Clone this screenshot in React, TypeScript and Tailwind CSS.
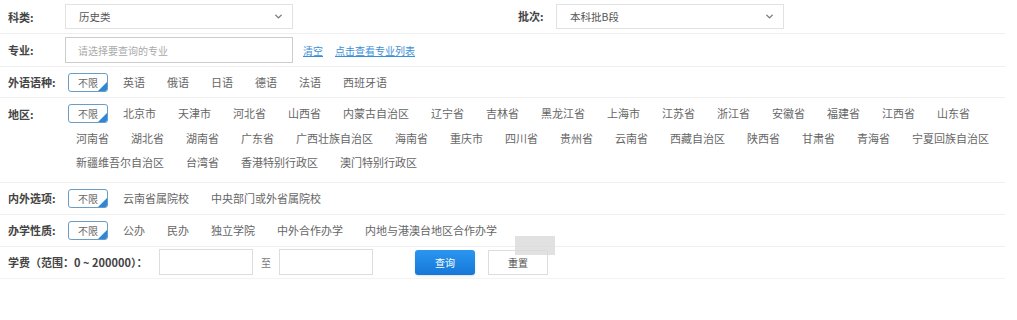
import { ChevronDown } from "lucide-react";

const font = "font-['Noto_Sans_CJK_SC','Noto_Sans',sans-serif]";

const langs = ["英语", "俄语", "日语", "德语", "法语", "西班牙语"];
const regions = [
	"北京市", "天津市", "河北省", "山西省", "内蒙古自治区", "辽宁省", "吉林省", "黑龙江省", "上海市", "江苏省", "浙江省", "安徽省", "福建省", "江西省", "山东省",
	"河南省", "湖北省", "湖南省", "广东省", "广西壮族自治区", "海南省", "重庆市", "四川省", "贵州省", "云南省", "西藏自治区", "陕西省", "甘肃省", "青海省", "宁夏回族自治区",
	"新疆维吾尔自治区", "台湾省", "香港特别行政区", "澳门特别行政区",
];
const inOut = ["云南省属院校", "中央部门或外省属院校"];
const schoolTypes = ["公办", "民办", "独立学院", "中外合作办学", "内地与港澳台地区合作办学"];

const Label = ({ children, className = "" }: { children: React.ReactNode; className?: string }) => (
	<div className={`w-[57px] shrink-0 text-[11px] font-bold text-[#444] ${className}`}>{children}</div>
);

const AnyTag = () => (
	<div className="relative ml-[3px] mr-[4px] flex h-[19px] w-[40px] items-center justify-center overflow-hidden rounded-[3px] border border-[#6a9cc4] bg-white text-[10px] text-[#666]">
		不限
		<span className="absolute bottom-0 right-0 h-0 w-0 border-b-[9px] border-l-[9px] border-b-[#2f86d6] border-l-transparent" />
	</div>
);

const Options = ({ items }: { items: string[] }) => (
	<div className="flex flex-1 flex-wrap items-center">
		<AnyTag />
		{items.map((item) => (
			<span key={item} className="px-[11px] text-[11px] leading-[24.5px] text-[#666]">
				{item}
			</span>
		))}
	</div>
);

const Select = ({ value }: { value: string }) => (
	<div className="flex h-[25px] w-[228px] items-center justify-between border border-[#e2e2e2] bg-white pl-[13px] pr-2 text-[10.5px] text-[#555]">
		<span>{value}</span>
		<ChevronDown size={11} strokeWidth={3} className="text-[#777]" />
	</div>
);

export default function App() {
	return (
		<div className={`relative h-[320px] w-[1017px] bg-white ${font}`}>
			<div className="w-[1005px]">
				<div className="flex h-[34px] items-center border-b border-[#eee] pl-2">
					<Label className="mt-[1px]">科类:</Label>
					<Select value="历史类" />
					<div className="ml-[225px] w-[38px] text-[11px] font-bold text-[#444]">批次:</div>
					<Select value="本科批B段" />
				</div>

				<div className="flex h-[33px] items-center border-b border-[#eee] pl-2">
					<Label>专业:</Label>
					<div className="flex h-[26px] w-[228px] items-center border border-[#ccc] bg-white pl-3 text-[10px] text-[#aaa]">
						请选择要查询的专业
					</div>
					<a className="ml-[10px] text-[10px] text-[#3a8fd6] underline">清空</a>
					<a className="ml-[12px] text-[10px] text-[#3a8fd6] underline">点击查看专业列表</a>
				</div>

				<div className="flex h-[31px] items-center border-b border-[#eee] pl-2">
					<Label>外语语种:</Label>
					<Options items={langs} />
				</div>

				<div className="flex items-start border-b border-[#eee] pb-[7px] pl-2 pt-[3px]">
					<Label className="mt-[5px]">地区:</Label>
					<div className="w-[935px]">
						<Options items={regions} />
					</div>
				</div>

				<div className="flex h-[32px] items-center border-b border-[#eee] pl-2">
					<Label>内外选项:</Label>
					<Options items={inOut} />
				</div>

				<div className="flex h-[32px] items-center border-b border-[#eee] pl-2">
					<Label>办学性质:</Label>
					<Options items={schoolTypes} />
				</div>

				<div className="flex h-[32px] items-center border-b border-[#f3f3f3] pl-2">
					<div className="w-[151px] shrink-0 text-[11px] font-bold text-[#444]">学费（范围：0 ~ 200000）：</div>
					<div className="h-[26px] w-[94px] border border-[#ddd] bg-white" />
					<span className="mx-[8px] text-[10px] text-[#777]">至</span>
					<div className="h-[26px] w-[94px] border border-[#ddd] bg-white" />
					<button className="ml-[42px] h-[25px] w-[60px] rounded-[3px] bg-gradient-to-b from-[#2a96f0] to-[#1677d8] text-[10px] text-white shadow-sm">
						查询
					</button>
					<button className="ml-[13px] h-[25px] w-[60px] border border-[#ddd] bg-white text-[10px] text-[#555]">
						重置
					</button>
				</div>
			</div>
			<div className="absolute left-[515px] top-[236px] h-[19px] w-[40px] bg-[#d9d9d9]/80" />
		</div>
	);
}
